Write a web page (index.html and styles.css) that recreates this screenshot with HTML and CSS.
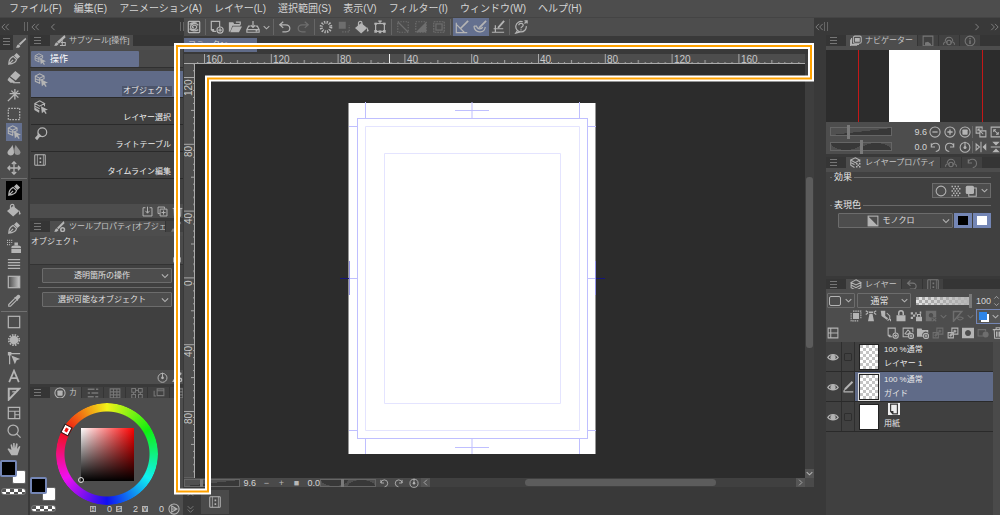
FILE: index.html
```html
<!DOCTYPE html>
<html lang="ja">
<head>
<meta charset="utf-8">
<title>コミック</title>
<link rel="stylesheet" href="styles.css">
</head>
<body>
<svg class="sprite" aria-hidden="true">
  <symbol id="spiral" viewBox="0 0 16 16"><rect x="1.500" y="1.500" width="13" height="13" rx="1"/><path d="M13 6c-3-3-9-2-9 2 0 3 4 4 6 2 2-1.500 1-4-1-4-3 0-4 3-1 3M3 10c2 3 7 3 10 1M3 5c2-2 5-2.500 8-1.500"/></symbol>
  <symbol id="newdoc" viewBox="0 0 16 16"><path d="M7 13H3.500L1.500 11V1.500H11V8M1.500 11H4v2"/><circle cx="11.500" cy="11.500" r="3.500"/><path d="M9.500 11.500h4M11.500 9.500v4"/></symbol>
  <symbol id="folder" viewBox="0 0 16 16"><path class="f" d="M1 14V2.500h5l1 2h7v2H5L3 12z"/><path class="f" d="M5.500 7.500H16L12.500 14H2.500z"/><path d="M9 2.500h5v3"/></symbol>
  <symbol id="save" viewBox="0 0 16 16"><path d="M5 7H3L1 11v3h14v-3l-2-4h-2M1 11h14M8 1v7M5.500 6L8 8.500 10.500 6M11 12.500h2"/></symbol>
  <symbol id="chev" viewBox="0 0 16 16"><path d="M3 5.500l5 5 5-5" stroke-width="1.800"/></symbol>
  <symbol id="undo" viewBox="0 0 16 16"><path d="M6 2L2 5.500 6 9M2 5.500h7c6 0 6 8 0 8H5"/></symbol>
  <symbol id="redo" viewBox="0 0 16 16"><path d="M10 2l4 3.500L10 9M14 5.500H7c-6 0-6 8 0 8h4"/></symbol>
  <symbol id="burst" viewBox="0 0 16 16"><circle cx="8" cy="8" r="5.500" stroke-width="3.500" stroke-dasharray="1.500 1.380"/></symbol>
  <symbol id="selout" viewBox="0 0 16 16"><rect class="f" x="2" y="2" width="8" height="8"/><path d="M6 13.500h8V6" stroke-dasharray="1.500 1.500"/></symbol>
  <symbol id="bucket" viewBox="0 0 16 16"><path class="f" d="M7 3.500L0 9l7 6.500L14 9zM14 8l1.800 4.500-2.300 1z"/><path d="M4 7V3.500a2 2 0 0 1 4 0V6"/></symbol>
  <symbol id="transform" viewBox="0 0 16 16"><rect x="3" y="4" width="10" height="9"/><path class="f" d="M1.500 3h3v2.500h-3zM11.500 3h3v2.500h-3zM1.500 11.500h3v3h-3zM11.500 11.500h3v3h-3zM6.500 12h3v3h-3z"/><path d="M8 1v3M6 1.200h4"/></symbol>
  <symbol id="desel" viewBox="0 0 16 16"><rect x="2" y="2" width="12" height="12" stroke-dasharray="1.500 1.500"/><path d="M2 2l12 12"/></symbol>
  <symbol id="invsel" viewBox="0 0 16 16"><rect x="2" y="2" width="12" height="12" stroke-dasharray="1.500 1.500"/><path class="f" d="M14 2v12H2z"/></symbol>
  <symbol id="border" viewBox="0 0 16 16"><rect x="2" y="2" width="12" height="12" stroke-dasharray="2 1"/><rect x="4.500" y="4.500" width="7" height="7"/></symbol>
  <symbol id="snap1" viewBox="0 0 16 16"><path d="M1.500 3v11.500H14M1.500 5l9 9"/><path d="M15 1L6 10" stroke-width="2"/></symbol>
  <symbol id="snap2" viewBox="0 0 16 16"><path d="M1 7c1 8 12 9 13 1M1 7h3c1 4 6 4 7 1"/><path d="M15 1L7 9" stroke-width="2"/></symbol>
  <symbol id="snap3" viewBox="0 0 16 16"><path d="M1 14h14M3 10h11M5 6v8"/><path d="M15 1L8 9" stroke-width="2"/></symbol>
  <symbol id="help" viewBox="0 0 16 16"><path d="M10 2a6 6 0 1 0 4 5M4 12l-2 3 5-1.500M5.500 6c0-3 5-3 5 0 0 2-2.500 1.500-2.500 3.500M8 10.500v1.500M12 4l2.500-2.500M12 1h3v3"/></symbol>
  <symbol id="pen" viewBox="0 0 16 16"><path d="M2 14c0-4 1-7 5-9l4 3.500c-1 4-4 5-9 5.500zl5-5"/><path class="f" d="M8 4l3-3 4 4-3 3z"/></symbol>
  <symbol id="brush" viewBox="0 0 16 16"><path class="f" d="M14 1L5 9l2 2 8-8zM5 10c-3 0-2 3-4 4 3 1 6 0 6-2z"/></symbol>
  <symbol id="subtool" viewBox="0 0 16 16"><path class="f" d="M14 0L4 9l2.500 2.500L15.500 3zM4 10c-3 0-2 3-4 4 3 1 5 0 6-2z"/><path d="M9 10h6v4H8M11 7v7"/></symbol>
  <symbol id="toolprop" viewBox="0 0 16 16"><path class="f" d="M13 0L4 9l2 2 8-8zM4 10c-3 0-2 3-4 4 3 1 5 0 6-2z"/><circle cx="11.500" cy="11.500" r="2.500" stroke-width="2"/></symbol>
  <symbol id="eraser" viewBox="0 0 16 16"><path class="f" d="M9.500 1l6 5-5.500 6-6.500-5zM2.500 8L9 13l-1 1.500H4L.5 11.500z"/><path d="M7 14.500h8"/></symbol>
  <symbol id="wand" viewBox="0 0 16 16"><path d="M1 15l7-7M9 1v12M3 6.500h12M5 3l8 8M13 3L7 9" stroke-width="1.500"/></symbol>
  <symbol id="marquee" viewBox="0 0 16 16"><rect x="1.500" y="1.500" width="13" height="13" stroke-dasharray="2 1.250"/></symbol>
  <symbol id="cube" viewBox="0 0 16 16"><path d="M7 12L1.500 9.500V3.500L6.500 1l5 2.500V7M1.500 3.500L6.500 6l5-2.500M6.500 6v6M1.500 6.500c3 2 7 2 10 0" stroke-width="1.200"/><path class="f" d="M8 7l8 4-3.500 1 2 3-1.200 1-2-3L9 15z"/></symbol>
  <symbol id="layersel" viewBox="0 0 16 16"><path d="M1 4l5.500-3L12 4 6.500 7zM1 4v7l5 3M1 7l5.500 3M12 4v3M1 9.500l5 3" stroke-width="1.200"/><path class="f" d="M8 7l8 4-3.500 1 2 3-1.200 1-2-3L9 15z"/></symbol>
  <symbol id="drops" viewBox="0 0 16 16"><path class="f" d="M6 2c0 3-5.500 6-5.500 9a3.800 3.800 0 0 0 7.500 0c0-4-1-6-2-9z"/><path class="f" d="M10 2c-1 3-2 5-1.500 9a3.600 3.600 0 0 0 7 0c0-3-4.500-6-5.500-9z" opacity=".7"/></symbol>
  <symbol id="move" viewBox="0 0 16 16"><path d="M8 1v14M1 8h14M5.500 3.500L8 1l2.500 2.500M5.500 12.500L8 15l2.500-2.500M3.500 5.500L1 8l2.500 2.500M12.500 5.500L15 8l-2.500 2.500" stroke-width="1.500"/></symbol>
  <symbol id="spray" viewBox="0 0 16 16"><path class="f" d="M5 9c0-2 11-2 11 0v1.500H5zM5 11.500h11V16H5zM8.500 4h4v3h-4z"/><path d="M0 1.500h6M0 4h6M0 6.500h5" stroke-dasharray="1.200 1.200"/></symbol>
  <symbol id="lines" viewBox="0 0 16 16"><path d="M1 3h14M1 6.300h14M1 9.600h14M1 13h14"/></symbol>
  <symbol id="grad" viewBox="0 0 16 16"><rect class="gr" x="1.500" y="1.500" width="13" height="13"/></symbol>
  <symbol id="dropper" viewBox="0 0 16 16"><path d="M9 5L2 12v2h2l7-7"/><path class="f" d="M8 4l4 4 1-2 2-2c1-2-1-4-3-3l-2 2z"/></symbol>
  <symbol id="square" viewBox="0 0 16 16"><rect x="1.500" y="1.500" width="13" height="13"/></symbol>
  <symbol id="flash" viewBox="0 0 16 16"><circle class="f" cx="8" cy="8" r="5"/><circle cx="8" cy="8" r="6" stroke-width="2" stroke-dasharray="1.800 1.340"/></symbol>
  <symbol id="nodes" viewBox="0 0 16 16"><path class="f" d="M1 1h4v4H1zM5 5l10 4-4 1.500L9 15z"/><path d="M4 3h11M3 4v11"/></symbol>
  <symbol id="lettera" viewBox="0 0 16 16"><path d="M2.500 15L8 2l5.500 13M4.500 10.500h7" stroke-width="2"/></symbol>
  <symbol id="ruler" viewBox="0 0 16 16"><path d="M2 2h12L2 14.500z" stroke-width="2.200"/><path d="M6 5.500h4"/></symbol>
  <symbol id="frame" viewBox="0 0 16 16"><path d="M1.500 1.500h13v13h-13zM1.500 6h13M9 10h5.500M9 6v8.500"/></symbol>
  <symbol id="zoom" viewBox="0 0 16 16"><circle cx="7" cy="7" r="5.800"/><path d="M11 11l4.500 4.500"/></symbol>
  <symbol id="hand" viewBox="0 0 16 16"><path class="f" d="M5 15L.5 8l1.500-1 3 2-1-6 1.500-.5L7 7V1h1.700L9 7l1.500-5.500 1.700.5L11.500 8 14 4.500l1.300.5L12 15z"/></symbol>
  <symbol id="light" viewBox="0 0 16 16"><circle cx="9.500" cy="6" r="5"/><path class="f" d="M4.500 6l5 5-3 .5-3 3.500L1 12.500 4 9z"/></symbol>
  <symbol id="film" viewBox="0 0 16 16"><rect x="1" y="1" width="14" height="14" rx="1"/><path d="M4.500 1v14" stroke-width="1"/><path d="M12.500 1v14" stroke-width="1"/><path d="M8.500 4.500v2.500M8.500 9.500v2.500" stroke-width="2.200"/></symbol>
  <symbol id="import" viewBox="0 0 16 16"><path d="M5 2.500H1.500v12h13v-12H11M8 1v9M5 7l3 3.500L11 7"/></symbol>
  <symbol id="dup" viewBox="0 0 16 16"><path d="M11 4V1.500H1.500V11H4M4.500 4.500h10v10h-10zM6.500 9.500h6M9.500 6.500v6"/></symbol>
  <symbol id="trash" viewBox="0 0 16 16"><path d="M1 3.500h14M5.500 3V1h5v2M3 4l.5 11h9L13 4M6 6v7M8 6v7M10 6v7"/></symbol>
  <symbol id="lock" viewBox="0 0 16 16"><path class="f" d="M2 7h12v8H2z"/><path d="M5 7V4a3 3 0 0 1 6 0v3" stroke-width="2"/></symbol>
  <symbol id="reset" viewBox="0 0 16 16"><circle cx="8" cy="8.500" r="6.500"/><circle class="f" cx="8" cy="8.500" r="2"/><path d="M8 1v7"/></symbol>
  <symbol id="wheel" viewBox="0 0 16 16"><circle cx="8" cy="8" r="6.800"/><rect class="f" x="4.500" y="4.500" width="7" height="7" rx="1"/></symbol>
  <symbol id="sliders" viewBox="0 0 16 16"><path d="M1 3h9M12 3h3M1 8h3M6 8h9M1 13h8M11 13h4" stroke-width="2"/></symbol>
  <symbol id="grid" viewBox="0 0 16 16"><path d="M1.500 2.500h13v12h-13zM1.500 6.500h13M1.500 10.500h13M6 2.500v12M10.500 2.500v12"/></symbol>
  <symbol id="mix" viewBox="0 0 16 16"><path d="M1 2h5v5H1zM10 2h5v5h-5zM6 4.500h4M3.500 7v3M12.500 7v3M1 10h5v5H1zM10 10h5v5h-5z"/></symbol>
  <symbol id="stack" viewBox="0 0 16 16"><path d="M4 12H1.500V5M5.500 2.500h9v9h-9zM5.500 5h9"/></symbol>
  <symbol id="nav" viewBox="0 0 16 16"><rect x="4.500" y="1.500" width="10.500" height="9.500" rx="2"/><rect class="f" x="6.500" y="4" width="6.500" height="5"/><path d="M2 4v8.500h10M.5 6v8.500h9"/></symbol>
  <symbol id="image" viewBox="0 0 16 16"><path d="M1.500 1.500h13v13h-13z"/><path class="f" d="M4 14V10l4-1 4 3v2z"/></symbol>
  <symbol id="cloud" viewBox="0 0 16 16"><path d="M3 8a5 5 0 0 1 10 0M1 13a3 3 0 0 1 5-3M15 13a3 3 0 0 0-5-3"/><circle cx="8" cy="10" r="3"/></symbol>
  <symbol id="info" viewBox="0 0 16 16"><circle cx="8" cy="8" r="6.500"/><path d="M8 4v1.500M8 7v5" stroke-width="2"/></symbol>
  <symbol id="minus" viewBox="0 0 16 16"><circle cx="8" cy="8" r="6.800"/><path d="M4.500 8h7" stroke-width="1.700"/></symbol>
  <symbol id="plus" viewBox="0 0 16 16"><circle cx="8" cy="8" r="6.800"/><path d="M4.500 8h7M8 4.500v7" stroke-width="1.700"/></symbol>
  <symbol id="fit" viewBox="0 0 16 16"><path d="M9.500 5V1.500h-8v8H6M6.500 6.500h8v8h-8zM4 4l7 7M4 7V4h3"/></symbol>
  <symbol id="full" viewBox="0 0 16 16"><path d="M1.500 1.500h13v13h-13zM5 5l6 6M5 8V5h3M11 8v3H8"/></symbol>
  <symbol id="rotl" viewBox="0 0 16 16"><path d="M3 3v5h5M3 8a5.500 5.500 0 1 1 6 6" stroke-width="1.400"/></symbol>
  <symbol id="rotr" viewBox="0 0 16 16"><path d="M13 3v5H8M13 8a5.500 5.500 0 1 0-6 6" stroke-width="1.400"/></symbol>
  <symbol id="fliph" viewBox="0 0 16 16"><path d="M1.500 4v8L6 8zM8 1v14"/><path class="f" d="M15 3v10l-5-5z"/></symbol>
  <symbol id="flipv" viewBox="0 0 16 16"><path d="M1 8h14"/><path class="f" d="M3 1h10L8 6zM3 15h10L8 10z"/></symbol>
  <symbol id="layers" viewBox="0 0 16 16"><path d="M8 1l6.500 3.500L8 8 1.500 4.500zM1.500 4.500v7L8 15l6.500-3.500v-7M1.500 8L8 11.500 14.500 8"/></symbol>
  <symbol id="layprop" viewBox="0 0 16 16"><path d="M7 1l6 3-6 3.500L1 4zM1 4v7l5 3M1 7.500L6 10M13 4v3"/><path class="f" d="M8 8h2v2H8zM12 8h2v2h-2zM10 10h2v2h-2zM8 12h2v2H8zM12 12h2v2h-2z"/></symbol>
  <symbol id="ring" viewBox="0 0 16 16"><circle cx="8" cy="8" r="6.500"/></symbol>
  <symbol id="tone" viewBox="0 0 16 16"><path d="M2 2h12M2 8h12M2 14h12" stroke-width="2" stroke-dasharray="2 2"/><path d="M4 5h10M4 11h10" stroke-width="2" stroke-dasharray="2 2"/></symbol>
  <symbol id="copyf" viewBox="0 0 16 16"><path d="M12 4h3v11H5v-3"/><rect class="f" x="1" y="1" width="11" height="11" rx="2"/></symbol>
  <symbol id="mono" viewBox="0 0 16 16"><rect x="1.500" y="1.500" width="13" height="13"/><path class="f" d="M1.500 1.500v13h13z"/></symbol>
  <symbol id="clip" viewBox="0 0 16 16"><path d="M1.500 4v10.500H12M4 1.500h10.500V12" stroke-dasharray="2 1"/><rect class="f" x="4" y="4" width="8" height="8"/></symbol>
  <symbol id="tower" viewBox="0 0 16 16"><path class="f" d="M6 5h4l2 10H4zM5 2h6v2H5z"/><path d="M1 1l3 2M15 1l-3 2M1 6l3-2M15 6l-3-2"/></symbol>
  <symbol id="draft" viewBox="0 0 16 16"><path class="f" d="M1 1h6v7l4 3-2 2-7-5z"/><path d="M9 4l4 4v4l-3 2M14 12v3"/></symbol>
  <symbol id="lockalpha" viewBox="0 0 16 16"><path class="f" d="M1 3h3v3H1zM4 6h3v3H4zM1 9h3v3H1zM7 3h2v3H7zM8 9h8v6H8zM13 2h2v3h-2z"/><path d="M10 9V6h4v3"/></symbol>
  <symbol id="maskx" viewBox="0 0 16 16"><path class="f" fill-rule="evenodd" d="M1 1h14v9H9v5H1zM8 4a3 3 0 1 0 .01 0z"/><path d="M10 11l5 4M15 11l-5 4"/></symbol>
  <symbol id="rulerx" viewBox="0 0 16 16"><path d="M2 15V2h11z" stroke-width="2"/><path d="M7 11c2-2 5-2 8 0-3 3-6 3-8 0z"/></symbol>
  <symbol id="panes" viewBox="0 0 16 16"><path d="M1.500 1.500h13v13h-13zM1.500 8h13M5 1.500v13"/></symbol>
  <symbol id="newvec" viewBox="0 0 16 16"><path d="M8 13H1.500V1.500h13V7M4 9l4-5 3 3-4 3z"/><circle cx="12" cy="12" r="3.500"/><path d="M10 12h4M12 10v4"/></symbol>
  <symbol id="newfold" viewBox="0 0 16 16"><path class="f" d="M0 2h6l1 2h8v4a4 4 0 0 0-7 5H0z"/><circle cx="12" cy="12" r="3.500"/><path d="M10 12h4M12 10v4"/></symbol>
  <symbol id="merge" viewBox="0 0 16 16"><path d="M6.500 1.500h8v8h-8zM1.500 7.500h7v7h-7zM10.500 3.500v4M8.500 5.500h4M5 9v4M3 11h4"/></symbol>
  <symbol id="mask" viewBox="0 0 16 16"><path class="f" fill-rule="evenodd" d="M0 1h16v14H0zM8 4a4 4 0 1 0 .01 0z"/></symbol>
  <symbol id="addmask" viewBox="0 0 16 16"><path d="M8 12H1.500V3.500h10V6"/><circle class="f" cx="11.500" cy="10" r="4"/></symbol>
  <symbol id="eye" viewBox="0 0 16 16"><path d="M1 8.500c3-5 11-5 14 0-3 4.500-11 4.500-14 0z"/><circle class="f" cx="8" cy="8.500" r="3.500"/></symbol>
  <symbol id="edit" viewBox="0 0 16 16"><path d="M14 1L4 11" stroke-width="2.500"/><path d="M2 14.500h13M2 14l2-3"/></symbol>
  <symbol id="play" viewBox="0 0 16 16"><circle cx="8" cy="8" r="6.800"/><path d="M5 4l7 4-7 4zM5 8h7"/></symbol>
  <symbol id="dbl" viewBox="0 0 16 16"><path d="M8 3L3 8l5 5M14 3L9 8l5 5"/></symbol>
  <symbol id="sgl" viewBox="0 0 16 16"><path d="M10.500 3l-5 5 5 5" stroke-width="1.500"/></symbol>
  <symbol id="paper" viewBox="0 0 16 16"><path d="M3.500 1.500h9v13H6.500L3.500 11.500zM3.500 11.500h3v3" stroke-width="1.500"/></symbol>
  <linearGradient id="gfill"><stop offset="0" stop-color="#4a4a4a"/><stop offset="1" stop-color="#c8c8c8"/></linearGradient>
</svg>

<nav class="menubar">
  <button>ファイル(F)</button><button>編集(E)</button><button>アニメーション(A)</button><button>レイヤー(L)</button><button>選択範囲(S)</button><button>表示(V)</button><button>フィルター(I)</button><button>ウィンドウ(W)</button><button>ヘルプ(H)</button>
</nav>

<div class="workspace">
  <section class="left">
    <div class="dockbar">
      <svg class="ic s10"><use href="#dbl"/></svg><i class="grip push"></i>
      <svg class="ic s10"><use href="#dbl"/></svg><svg class="ic s10 gap8"><use href="#sgl"/></svg><i class="grip push"></i>
    </div>
    <div class="leftcols">
      <aside class="tools">
        <div class="tabs"><i class="burger"></i><button class="tab on" aria-label="ツール"><svg class="ic s12"><use href="#brush"/></svg></button></div>
        <div class="toollist">
          <button aria-label="ペン"><svg class="ic"><use href="#pen"/></svg></button>
          <button aria-label="消しゴム"><svg class="ic"><use href="#eraser"/></svg></button>
          <button aria-label="自動選択"><svg class="ic"><use href="#wand"/></svg></button>
          <button aria-label="選択範囲"><svg class="ic"><use href="#marquee"/></svg></button>
          <button class="sel" aria-label="操作"><svg class="ic"><use href="#cube"/></svg></button>
          <button aria-label="色混ぜ"><svg class="ic"><use href="#drops"/></svg></button>
          <button aria-label="レイヤー移動"><svg class="ic"><use href="#move"/></svg></button>
          <hr>
          <button class="ink" aria-label="カラーペン"><svg class="ic"><use href="#pen"/></svg></button>
          <button aria-label="塗りつぶし"><svg class="ic"><use href="#bucket"/></svg></button>
          <button aria-label="筆"><svg class="ic"><use href="#pen"/></svg></button>
          <button aria-label="エアブラシ"><svg class="ic"><use href="#spray"/></svg></button>
          <button aria-label="流線"><svg class="ic"><use href="#lines"/></svg></button>
          <button aria-label="グラデーション"><svg class="ic"><use href="#grad"/></svg></button>
          <button aria-label="スポイト"><svg class="ic"><use href="#dropper"/></svg></button>
          <hr>
          <button aria-label="図形"><svg class="ic"><use href="#square"/></svg></button>
          <button aria-label="フラッシュ"><svg class="ic"><use href="#flash"/></svg></button>
          <button aria-label="線修正"><svg class="ic"><use href="#nodes"/></svg></button>
          <button aria-label="テキスト"><svg class="ic"><use href="#lettera"/></svg></button>
          <button aria-label="定規"><svg class="ic"><use href="#ruler"/></svg></button>
          <button aria-label="コマ枠"><svg class="ic"><use href="#frame"/></svg></button>
          <button aria-label="虫めがね"><svg class="ic"><use href="#zoom"/></svg></button>
          <button aria-label="手のひら"><svg class="ic"><use href="#hand"/></svg></button>
        </div>
        <div class="swatches"><i class="sub"></i><i class="main"></i><i class="clear"></i></div>
      </aside>

      <div class="palettes">
        <section class="palette subtools">
          <div class="tabs"><i class="burger"></i><button class="tab on"><svg class="ic s12"><use href="#subtool"/></svg>サブツール[操作]</button></div>
          <div class="group"><button><svg class="ic s12"><use href="#cube"/></svg>操作</button></div>
          <div class="items">
            <button class="on"><svg class="ic"><use href="#cube"/></svg><span>オブジェクト</span></button>
            <button><svg class="ic"><use href="#layersel"/></svg><span>レイヤー選択</span></button>
            <button><svg class="ic"><use href="#light"/></svg><span>ライトテーブル</span></button>
            <button><svg class="ic s12"><use href="#film"/></svg><span>タイムライン編集</span></button>
          </div>
          <div class="foot"><svg class="ic s11"><use href="#import"/></svg><svg class="ic s11"><use href="#dup"/></svg><svg class="ic s11"><use href="#trash"/></svg></div>
        </section>
        <section class="palette props">
          <div class="tabs"><i class="burger"></i><button class="tab on clip"><svg class="ic s12"><use href="#toolprop"/></svg>ツールプロパティ[オブジェ</button><button class="tab"><svg class="ic s12"><use href="#brush"/></svg></button></div>
          <div class="propname"><span>オブジェクト</span><svg class="ic s10"><use href="#lock"/></svg></div>
          <div class="propbody">
            <button class="drop"><span>透明箇所の操作</span><svg class="ic s10"><use href="#chev"/></svg></button>
            <hr>
            <button class="drop"><span>選択可能なオブジェクト</span><svg class="ic s10"><use href="#chev"/></svg></button>
          </div>
          <div class="foot"><svg class="ic s11"><use href="#reset"/></svg><svg class="ic s11"><use href="#toolprop"/></svg></div>
        </section>
        <section class="palette color">
          <div class="tabs">
            <i class="burger"></i><button class="tab on wide"><svg class="ic s12"><use href="#wheel"/></svg>カ</button><button class="tab"><svg class="ic s12"><use href="#sliders"/></svg></button><button class="tab"><svg class="ic s12"><use href="#grid"/></svg></button><button class="tab"><svg class="ic s12"><use href="#mix"/></svg></button><button class="tab"><svg class="ic s12"><use href="#stack"/></svg></button><button class="tab"><svg class="ic s12"><use href="#grid"/></svg></button>
          </div>
          <div class="wheelbox">
            <div class="huewheel"><i class="hues"></i><i class="sv"></i><i class="huemark"></i><i class="svmark"></i></div>
            <div class="swatches"><i class="sub"></i><i class="main"></i><i class="clear"></i></div>
            <div class="hsv"><b>H</b><span>0</span><b>S</b><span>2</span><b>V</b><span>0</span><svg class="ic s12"><use href="#play"/></svg></div>
          </div>
        </section>
      </div>
    </div>
  </section>

  <main class="center">
    <div class="commands">
      <button aria-label="スタジオ"><svg class="ic"><use href="#spiral"/></svg></button><i></i>
      <button aria-label="新規"><svg class="ic"><use href="#newdoc"/></svg></button><button aria-label="開く"><svg class="ic"><use href="#folder"/></svg></button><button aria-label="保存"><svg class="ic"><use href="#save"/></svg></button><button class="slim" aria-label="保存メニュー"><svg class="ic s9"><use href="#chev"/></svg></button><i></i>
      <button aria-label="取り消し"><svg class="ic"><use href="#undo"/></svg></button><button class="dim" aria-label="やり直し"><svg class="ic"><use href="#redo"/></svg></button><i></i>
      <button aria-label="消去"><svg class="ic"><use href="#burst"/></svg></button><button class="dim" aria-label="選択範囲外を消去"><svg class="ic"><use href="#selout"/></svg></button><button aria-label="塗りつぶし"><svg class="ic"><use href="#bucket"/></svg></button><button aria-label="変形"><svg class="ic"><use href="#transform"/></svg></button><i></i>
      <button class="dim" aria-label="選択を解除"><svg class="ic"><use href="#desel"/></svg></button><button class="dim" aria-label="選択範囲を反転"><svg class="ic"><use href="#invsel"/></svg></button><button class="dim" aria-label="境界線"><svg class="ic"><use href="#border"/></svg></button><i></i>
      <button class="on" aria-label="定規にスナップ"><svg class="ic"><use href="#snap1"/></svg></button><button class="on" aria-label="特殊定規にスナップ"><svg class="ic"><use href="#snap2"/></svg></button><button aria-label="グリッドにスナップ"><svg class="ic"><use href="#snap3"/></svg></button><i></i>
      <button aria-label="サポート"><svg class="ic"><use href="#help"/></svg></button>
    </div>
    <div class="doctabs"><button>コミック1*</button></div>
    <div class="view">
      <svg class="hruler">
        <defs>
          <pattern id="ht" x="20" y="0" width="66.800" height="10" patternUnits="userSpaceOnUse"><path class="tk" d="M.5 0v10M6.500 8v2M13.500 8v2M20.500 8v2M26.500 8v2M33.500 6v4M40.500 8v2M46.500 8v2M53.500 8v2M60.500 8v2"/></pattern>
          <pattern id="vt" x="0" y="13" width="11" height="66.800" patternUnits="userSpaceOnUse"><path class="tk" d="M0 .5h11M9 6.500h2M9 13.500h2M9 20.500h2M9 26.500h2M7 33.500h4M9 40.500h2M9 46.500h2M9 53.500h2M9 60.500h2"/></pattern>
        </defs>
        <rect x="11" width="100%" height="10" fill="url(#ht)"/>
        <path class="tk bright" d="M205.500 0v10"/>
        <text x="22" y="9">160</text><text x="89" y="9">120</text><text x="156" y="9">80</text><text x="223" y="9">40</text><text x="289" y="9">0</text><text x="356" y="9">40</text><text x="423" y="9">80</text><text x="490" y="9">120</text><text x="557" y="9">160</text>
      </svg>
      <svg class="vruler">
        <rect width="11" height="100%" fill="url(#vt)"/>
        <text transform="translate(8 32) rotate(-90)">120</text><text transform="translate(8 93) rotate(-90)">80</text><text transform="translate(8 160) rotate(-90)">40</text><text transform="translate(8 222) rotate(-90)">0</text><text transform="translate(8 293) rotate(-90)">40</text><text transform="translate(8 360) rotate(-90)">80</text>
      </svg>
      <div class="canvas">
        <svg class="page" width="266" height="356" viewBox="0 0 266 356">
          <rect x="8.500" y="2" width="247" height="351" fill="#fff"/>
          <g fill="none" stroke="#bfbfff">
            <rect x="17.500" y="17.500" width="230" height="320"/>
            <path d="M25.500 1v16M239.500 1v16M132 1v16M115 9.500h34M25.500 338v15M239.500 338v15M132 338v15M115 346.500h34M9 25.500h8M248 25.500h8M9 329.500h8M248 329.500h8M9 177.500h8M248 177.500h8"/>
            <path stroke="#e4e4ff" d="M25.500 25.500h214v304h-214zM44.500 52.500h176v250h-176z"/>
            <path stroke="#9494e6" d="M9.500 160v34M255.500 160v34"/>
            <path stroke="#15157c" d="M0 177.500h9M256 177.500h9"/>
          </g>
        </svg>
      </div>
      <div class="vscroll"><i class="thumb"></i><button aria-label="下へ"><svg class="ic s9"><use href="#chev"/></svg></button></div>
    </div>
    <div class="status">
      <input class="wedge" type="range" aria-label="表示倍率" value="30"><output>9.6</output>
      <span class="gap"></span><button>−</button><button>+</button><button>■</button>
      <output>0.0</output><input class="wave" type="range" aria-label="回転" value="40">
      <button aria-label="左回転"><svg class="ic s10"><use href="#rotl"/></svg></button><button aria-label="右回転"><svg class="ic s10"><use href="#rotr"/></svg></button><button aria-label="回転をリセット"><svg class="ic s10"><use href="#reset"/></svg></button>
      <div class="hscroll"><button aria-label="左へ"><svg class="ic s9"><use href="#sgl"/></svg></button><i class="thumb"></i><button class="flip" aria-label="右へ"><svg class="ic s9"><use href="#sgl"/></svg></button></div>
    </div>
    <div class="timeline"><div class="fold"><svg class="ic s9 up"><use href="#dbl"/></svg><svg class="ic s9 down"><use href="#dbl"/></svg></div><button aria-label="タイムライン"><svg class="ic s12"><use href="#film"/></svg></button></div>
    <svg class="callout" viewBox="0 0 640 452" preserveAspectRatio="none" aria-hidden="true">
      <path class="halo" d="M3 3H637V35.500H34V448.500H3z"/><path class="core" d="M3 3H637V35.500H34V448.500H3z"/>
    </svg>
  </main>

  <section class="right">
    <div class="dockbar"><svg class="ic s10"><use href="#dbl"/></svg><i class="grip"></i><svg class="ic s10 flip push"><use href="#sgl"/></svg><svg class="ic s10 flip gap8"><use href="#dbl"/></svg></div>
    <div class="dock">
      <section class="palette navigator">
        <div class="tabs"><i class="burger"></i><button class="tab on"><svg class="ic s12"><use href="#nav"/></svg>ナビゲーター</button><button class="tab"><svg class="ic s12"><use href="#image"/></svg></button><button class="tab"><svg class="ic s12"><use href="#cloud"/></svg></button><button class="tab"><svg class="ic s12"><use href="#info"/></svg></button></div>
        <div class="preview"><i></i></div>
        <div class="navctl">
          <div><input class="wedge" type="range" aria-label="ズーム" value="28"><output>9.6</output><button aria-label="縮小"><svg class="ic s12"><use href="#minus"/></svg></button><button aria-label="拡大"><svg class="ic s12"><use href="#plus"/></svg></button><button aria-label="100%"><svg class="ic s12"><use href="#wheel"/></svg></button><i></i><button aria-label="全体表示"><svg class="ic s12"><use href="#fit"/></svg></button><button aria-label="フィット"><svg class="ic s12"><use href="#full"/></svg></button></div>
          <div><input class="wave" type="range" aria-label="角度" value="50"><output>0.0</output><button aria-label="左回転"><svg class="ic s12"><use href="#rotl"/></svg></button><button aria-label="右回転"><svg class="ic s12"><use href="#rotr"/></svg></button><button aria-label="リセット"><svg class="ic s12"><use href="#reset"/></svg></button><i></i><button aria-label="左右反転"><svg class="ic s12"><use href="#fliph"/></svg></button><button aria-label="上下反転"><svg class="ic s12"><use href="#flipv"/></svg></button></div>
        </div>
      </section>
      <section class="palette layerprops">
        <div class="tabs"><i class="burger"></i><button class="tab on"><svg class="ic s12"><use href="#layprop"/></svg>レイヤープロパティ</button><button class="tab"><svg class="ic s12"><use href="#cloud"/></svg></button><button class="tab"><svg class="ic s12"><use href="#rotl"/></svg></button></div>
        <div class="lpbody">
          <h3>効果</h3>
          <div class="fx"><svg class="ic s12"><use href="#ring"/></svg><svg class="ic s12"><use href="#tone"/></svg><svg class="ic s12"><use href="#copyf"/></svg><svg class="ic s9"><use href="#chev"/></svg></div>
          <h3>表現色</h3>
          <div class="mode"><button class="drop"><span><svg class="ic s12"><use href="#mono"/></svg>モノクロ</span><svg class="ic s10"><use href="#chev"/></svg></button><button class="chip black" aria-label="黒"></button><button class="chip" aria-label="白"></button></div>
        </div>
      </section>
      <section class="palette layerpal">
        <div class="tabs"><i class="burger"></i><button class="tab on"><svg class="ic s12"><use href="#layers"/></svg>レイヤー</button><button class="tab"><svg class="ic s12"><use href="#undo"/></svg></button><button class="tab"><svg class="ic s12"><use href="#film"/></svg></button></div>
        <div class="blend">
          <button class="drop pc" aria-label="パレットカラー"><b></b><svg class="ic s9"><use href="#chev"/></svg></button>
          <button class="drop bm"><span>通常</span><svg class="ic s9"><use href="#chev"/></svg></button>
          <input class="opacity" type="range" aria-label="不透明度" value="100"><output>100</output><span class="spin"><svg class="ic s9 half"><use href="#chev"/></svg><svg class="ic s9"><use href="#chev"/></svg></span>
        </div>
        <div class="row2"><svg class="ic s12"><use href="#clip"/></svg><svg class="ic s12"><use href="#tower"/></svg><svg class="ic s12"><use href="#draft"/></svg><svg class="ic s12"><use href="#lock"/></svg><svg class="ic s12"><use href="#lockalpha"/></svg><span class="dim"><svg class="ic s12"><use href="#maskx"/></svg><svg class="ic s9"><use href="#chev"/></svg></span><span class="dim"><svg class="ic s12"><use href="#rulerx"/></svg><svg class="ic s9"><use href="#chev"/></svg></span><button class="laycol" aria-label="レイヤーカラー"><b></b><svg class="ic s9"><use href="#chev"/></svg></button></div>
        <div class="row3"><svg class="ic s12 first"><use href="#panes"/></svg><svg class="ic s12"><use href="#newdoc"/></svg><svg class="ic s12"><use href="#newvec"/></svg><svg class="ic s12"><use href="#newfold"/></svg><svg class="ic s12 dim"><use href="#merge"/></svg><svg class="ic s12"><use href="#merge"/></svg><svg class="ic s12"><use href="#mask"/></svg><svg class="ic s12 dim"><use href="#addmask"/></svg><svg class="ic s12"><use href="#trash"/></svg></div>
        <ul class="layers">
          <li><svg class="ic s12"><use href="#eye"/></svg><em><b></b></em><div><i class="thumb checker"></i><p>100 %通常<br>レイヤー 1</p></div></li>
          <li class="on"><svg class="ic s12"><use href="#eye"/></svg><em><svg class="ic s12"><use href="#edit"/></svg></em><div><i class="thumb checker"></i><p>100 %通常<br>ガイド</p></div></li>
          <li><svg class="ic s12"><use href="#eye"/></svg><em><b></b></em><div><i class="thumb"></i><p><svg class="ic s12 paper"><use href="#paper"/></svg><br>用紙</p></div></li>
        </ul>
      </section>
    </div>
  </section>
</div>
</body>
</html>
```

FILE: styles.css
```css
* { box-sizing: border-box; }
body {
  margin: 0;
  height: 100vh;
  display: flex;
  flex-direction: column;
  overflow: hidden;
  background: #393939;
  color: #d4d4d4;
  font: 8px/10px "Liberation Sans", "Noto Sans CJK JP", sans-serif;
}
button, input, output {
  font: inherit;
  color: inherit;
  margin: 0;
  padding: 0;
  border: 0;
  background: none;
}
hr { border: 0; margin: 0; background: #707070; }
button { display: flex; align-items: center; justify-content: center; white-space: nowrap; }

.sprite { position: absolute; width: 0; height: 0; }
.ic {
  width: 14px; height: 14px; flex: none;
  fill: none; stroke: currentColor; stroke-width: 1.4; color: #b4b4b4;
}
.ic.s12 { width: 12px; height: 12px; }
.ic.s11 { width: 11px; height: 11px; }
.ic.s10 { width: 10px; height: 10px; }
.ic.s9 { width: 9px; height: 9px; }
.f { fill: currentColor; stroke: none; }
.gr { fill: url(#gfill); }
.flip { transform: scaleX(-1); }
.ic.dim, .dim .ic { color: #6e6e6e; }

.menubar {
  display: flex; flex: none; gap: 12px;
  height: 18px; padding-left: 9px;
  background: #4d4d4d; font-size: 10px; line-height: 16px;
  border-bottom: 1px solid #444;
}
.workspace { flex: 1; min-height: 0; display: grid; grid-template-columns: 184px minmax(0, 1fr) 186px; }
.left, .right { display: flex; flex-direction: column; min-height: 0; min-width: 0; overflow: hidden; }

.dockbar { display: flex; align-items: center; height: 17px; flex: none; }
.dockbar .ic { color: #858585; }
.grip { width: 4px; height: 9px; border: solid #666; border-width: 0 1px; }
.push { margin-left: auto; }
.gap8 { margin-left: 8px; }
.left .dockbar .push:nth-child(2) { margin-left: 14px; margin-right: 2px; }

.leftcols { flex: 1; min-height: 0; display: grid; grid-template-columns: 28px minmax(0, 1fr); column-gap: 2px; }
.tools { background: #4d4d4d; display: flex; flex-direction: column; min-height: 0; overflow: hidden; }
.palettes { display: flex; flex-direction: column; gap: 3px; min-height: 0; margin-right: 1px; }
.palette { display: flex; flex-direction: column; background: #404040; flex: none; }

.tabs { display: flex; flex: none; height: 15px; background: #353535; border-bottom: 4px solid #4d4d4d; overflow: hidden; }
.tools .tabs { border: 0; }
.burger { width: 7px; height: 7px; margin: 2px 9px 0 4px; flex: none; background: repeating-linear-gradient(#767676 0 1px, transparent 1px 3px); }
.tools .burger { margin: 3px 3px 0 3px; }
.tab { flex: none; height: 12px; padding: 0 4px; gap: 3px; background: #414141; border-right: 1px solid #353535; color: #c4c4c4; overflow: hidden; }
.tab .ic { color: #777; }
.tab.on { background: #4d4d4d; }
.tab.on .ic { color: #b4b4b4; }
.tab.clip { width: 116px; justify-content: flex-start; }
.tools .tab { height: 15px; padding: 0 2px; }

.toollist { flex: 1; min-height: 0; display: flex; flex-direction: column; }
.toollist button { flex: 1; min-height: 0; }
.toollist hr { height: 1px; margin: 1px; flex: none; }
.toollist .sel, .toollist .ink { width: 16px; align-self: center; background: #64708f; }
.toollist .ink { background: #000; margin: 1px 0; }

.swatches { position: relative; height: 41px; margin-bottom: 16px; flex: none; }
.swatches i { position: absolute; }
.swatches .main { left: 0; top: 2px; width: 17px; height: 17px; background: #000; border: 2px solid #7486b5; border-radius: 2px; }
.swatches .sub { left: 12px; top: 12px; width: 14px; height: 14px; background: #fff; border: 1px solid #666; border-radius: 2px; }
.swatches .clear { left: 1px; top: 30px; width: 25px; height: 7px; border: 1px solid #777; border-radius: 3px; background: repeating-conic-gradient(#fff 0 25%, #555 0 50%) 0 0 / 8px 6px; }

.subtools { height: 183px; }
.group { height: 18px; padding: 1px; background: #4a4a4a; border-bottom: 1px solid #303030; flex: none; }
.group button { width: 108px; height: 16px; justify-content: flex-start; gap: 4px; padding-left: 3px; background: #66718f; border-radius: 1px; font-size: 9px; color: #fff; }
.items { flex: 1; padding: 3px 0 0 1px; }
.items button { width: 100%; height: 27px; padding: 2px 11px 0 3px; border-bottom: 1px solid #2a2a2a; align-items: flex-start; justify-content: space-between; }
.items span { align-self: flex-end; padding: 0 1px; margin-bottom: 1px; color: #eee; }
.items .on { background: #606b88; }
.items .on span { background: #4d556b; }
.foot { height: 14px; flex: none; background: #4d4d4d; display: flex; align-items: center; justify-content: flex-end; gap: 4px; }

.props { height: 163px; }
.propname { height: 29px; padding: 1px; background: #4a4a4a; border-bottom: 1px solid #333; display: flex; flex-direction: column; justify-content: space-between; color: #e4e4e4; flex: none; }
.propname .ic { align-self: flex-end; }
.propbody { flex: 1; padding: 3px 11px 0 12px; display: flex; flex-direction: column; gap: 4px; }
.propbody hr { height: 1px; margin-left: -4px; background: #6a6a6a; }
.drop { height: 15px; background: #4d4d4d; border: 1px solid #6c6c6c; border-radius: 1px; color: #e0e0e0; padding: 0 1px; }
.drop span { flex: 1; display: flex; justify-content: center; align-items: center; gap: 4px; }

.color { flex: 1; min-height: 0; background: #4d4d4d; }
.color .tabs { height: 11px; border: 0; }
.color .tab { padding: 0 2px; width: 22px; }
.color .tab.wide { width: 32px; }
.wheelbox { position: relative; flex: 1; display: flex; justify-content: center; padding-top: 5px; }
.huewheel { position: relative; width: 102px; height: 102px; }
.huewheel i { position: absolute; }
.hues { inset: 0; border-radius: 50%; background: conic-gradient(#f2f218, #10f010 60deg, #10f0f0 120deg, #1010f0 180deg, #f010f0 240deg, #f01010 300deg, #f2f218 360deg); mask: radial-gradient(circle, transparent 42px, #000 43px); }
.sv { inset: 25px 24px 24px 25px; background: linear-gradient(transparent, #000), linear-gradient(to right, #fff, #f00); }
.huemark { left: 7px; top: 23px; width: 7px; height: 8px; border: 2px solid #fff; outline: 1px solid #222; transform: rotate(28deg); }
.svmark { left: 22px; top: 74px; width: 6px; height: 6px; border: 1px solid #ddd; border-radius: 50%; }
.wheelbox .swatches { position: absolute; left: 0; bottom: 0; width: 28px; height: 40px; margin: 0; }
.hsv { position: absolute; right: 3px; bottom: 0; display: flex; align-items: center; gap: 4px; font-size: 9px; }
.hsv b { width: 6px; height: 6px; background: #b4b4b4; color: #444; font: bold 6px/6px "Liberation Sans", sans-serif; text-align: center; }
.hsv span { width: 12px; text-align: right; }

.center { position: relative; display: flex; flex-direction: column; min-width: 0; min-height: 0; }
.commands { display: flex; flex: none; height: 18px; padding-left: 1px; background: #4d4d4d; }
.commands button { width: 18px; }
.commands .slim { width: 9px; }
.commands i { width: 1px; margin: 1px 2px; background: #666; }
.commands .on { background: #64708f; }
.doctabs { height: 18px; padding-top: 2px; flex: none; }
.doctabs button { width: 73px; height: 14px; justify-content: flex-start; padding-left: 4px; background: #606b88; }

.view { flex: 1; min-height: 0; display: grid; grid-template: 10px minmax(0, 1fr) / 11px minmax(0, 1fr) 9px; background: #2c2c2c; }
.hruler { grid-column: 1 / 3; width: 100%; height: 10px; background: #4d4d4d; border-bottom: 1px solid #aaa; }
.vruler { grid-row: 2; width: 11px; height: 100%; background: #4d4d4d; border-right: 1px solid #aaa; }
.view text { fill: #c8c8c8; font-size: 10px; }
.tk { stroke: #a8a8a8; fill: none; }
.bright { stroke: #eee; }
.canvas { grid-row: 2; grid-column: 2; overflow: hidden; padding: 37px 0 0 145px; }
.page { display: block; }
.vscroll { grid-row: 1 / 3; grid-column: 3; display: flex; flex-direction: column; align-items: center; background: #3e3e3e; }
.vscroll .thumb { width: 7px; height: 171px; border-radius: 3px; background: #5c5c5c; margin: auto 0 121px; }
.vscroll button, .hscroll button { width: 9px; height: 9px; background: #555; flex: none; }

.status { height: 9px; flex: none; display: flex; align-items: center; background: #4a4a4a; font-size: 9px; }
.status > button { width: 15px; color: #b8b8b8; }
.status output { width: 16px; text-align: right; }
.status .gap { width: 3px; }
.status .wedge, .status .wave { width: 56px; height: 8px; }
.hscroll { flex: 1; height: 9px; display: flex; align-items: center; background: #404040; margin-right: 9px; }
.hscroll .thumb { height: 7px; width: 191px; margin: 0 80px 0 auto; border-radius: 4px; background: #5c5c5c; }
.timeline { flex: none; height: 28px; display: flex; padding-left: 2px; }
.timeline button { width: 28px; background: #4a4a4a; margin: 3px 0 1px; }
.fold { width: 15px; display: flex; flex-direction: column; justify-content: space-between; padding: 1px 0; }
.fold .ic { color: #888; }
.up { transform: rotate(90deg); }
.down { transform: rotate(-90deg); }

.callout { position: absolute; left: -10px; top: 25px; width: calc(100% + 10px); height: calc(100% - 45px); overflow: visible; pointer-events: none; }
.callout path { fill: none; vector-effect: non-scaling-stroke; }
.halo { stroke: #fff; stroke-width: 6px; }
.core { stroke: #ffa200; stroke-width: 2px; }

input[type=range] { appearance: none; height: 8px; border: 1px solid #666; border-radius: 0; }
input[type=range]::-webkit-slider-thumb { appearance: none; width: 3px; height: 14px; background: #7a7a7a; }
.status input[type=range]::-webkit-slider-thumb { height: 8px; }
.wedge { background: linear-gradient(to bottom right, #505050 50%, #383838 51%); }
.wave { background: radial-gradient(ellipse 25% 100% at 75% 100%, #383838 98%, transparent), radial-gradient(ellipse 25% 100% at 25% 0, #383838 98%, transparent), #505050; }

.dock { flex: 1; min-height: 0; margin-left: 12px; display: flex; flex-direction: column; gap: 3px; }
.dock .palette { overflow: hidden; }
.navigator { height: 119px; }
.preview { flex: 1; display: flex; justify-content: center; background: linear-gradient(#c31818, #c31818) 32px 0 / 1px 100% no-repeat, linear-gradient(#c31818, #c31818) 156px 0 / 1px 100% no-repeat, #2c2c2c; }
.preview i { width: 51px; background: #fff; margin-right: -2px; }
.navctl { height: 32px; flex: none; background: #4d4d4d; padding: 2px 0 0 4px; }
.navctl div { display: flex; align-items: center; height: 15px; font-size: 9px; }
.navctl input { width: 62px; flex: none; height: 9px; }
.navctl output { width: 35px; flex: none; text-align: right; }
.navctl button { width: 15px; flex: none; }
.navctl i { width: 1px; height: 12px; background: #666; flex: none; }

.layerprops { height: 119px; }
.lpbody { padding: 0 9px 0 4px; font-size: 9px; color: #e8e8e8; }
.lpbody h3 { margin: 0; font: inherit; line-height: 11px; display: flex; align-items: center; gap: 2px; }
.lpbody h3::before, .lpbody h3::after { content: ""; width: 2px; height: 1px; background: #6a6a6a; }
.lpbody h3::after { flex: 1; }
.fx { width: 59px; height: 15px; margin: 0 0 2px auto; border: 1px solid #6c6c6c; background: #4d4d4d; display: flex; align-items: center; justify-content: space-around; }
.mode { display: flex; gap: 1px; margin: 2px 0 0 8px; font-size: 8px; }
.mode .drop { flex: 1; }
.chip { width: 18px; height: 15px; background: #fff; border: 3px solid #7486b5; border-width: 3px 4px; }
.chip.black { background: #000; }

.layerpal { flex: 1; min-height: 0; background: linear-gradient(#404040, #404040) 0 0 / calc(100% - 7px) 100% no-repeat, #4a4a4a; }
.layerpal .tabs { height: 14px; }
.blend { height: 15px; display: flex; align-items: center; gap: 2px; padding-left: 1px; background: #4d4d4d; font-size: 9px; flex: none; }
.pc { width: 29px; gap: 3px; }
.pc b { width: 12px; height: 10px; border: 1px solid #b4b4b4; border-radius: 2px; }
.bm { width: 57px; }
.blend .opacity { width: 56px; height: 8px; margin-left: 3px; border: 0; background: linear-gradient(to right, transparent, #b4b4b4), repeating-conic-gradient(#e4e4e4 0 25%, #a8a8a8 0 50%) 0 0 / 6px 6px; }
.blend output { width: 18px; text-align: right; }
.spin { display: flex; flex-direction: column; }
.spin .ic.s9 { width: 7px; height: 7px; }
.half { transform: scaleY(-1); }
.row2 { height: 16px; flex: none; display: flex; align-items: center; gap: 3px; padding-left: 24px; background: #4d4d4d; }
.row2 span { width: 24px; display: flex; align-items: center; gap: 2px; flex: none; }
.laycol { width: 26px; height: 15px; border: 1px solid #7486b5; background: #555; flex: none; gap: 4px; margin-left: -3px; }
.laycol b { width: 8px; height: 8px; background: #2f86e8; box-shadow: 2px 2px #fff; }
.row3 { height: 18px; flex: none; display: flex; align-items: center; gap: 3px; padding-left: 1px; background: #4d4d4d; }
.row3 .first { margin-right: 45px; }
.layers { list-style: none; margin: 0 7px 0 0; padding: 0; }
.layers li { display: grid; grid-template-columns: 14px 13px minmax(0, 1fr); align-items: center; height: 30px; padding-left: 1px; border-bottom: 1px solid #2a2a2a; }
.layers em { height: 100%; display: flex; align-items: center; justify-content: center; border-left: 1px solid #2e2e2e; }
.layers em b { width: 8px; height: 8px; border: 1px solid #2e2e2e; border-radius: 1px; }
.layers div { height: 100%; display: flex; align-items: center; gap: 5px; padding-left: 4px; border-left: 1px solid #2e2e2e; }
.layers .on div { background: #606b88; }
.layers .thumb { width: 20px; height: 26px; border: 1px solid #222; background: #fff; }
.layers .checker { background: repeating-conic-gradient(#fff 0 25%, #c4c4c4 0 50%) 0 0 / 6px 6px; }
.layers .on .thumb { outline: 1px solid #ddd; }
.layers p { margin: 0; line-height: 14px; color: #e8e8e8; }
.layers .ic.paper { background: #eee; color: #333; margin-left: 4px; vertical-align: middle; }
```
